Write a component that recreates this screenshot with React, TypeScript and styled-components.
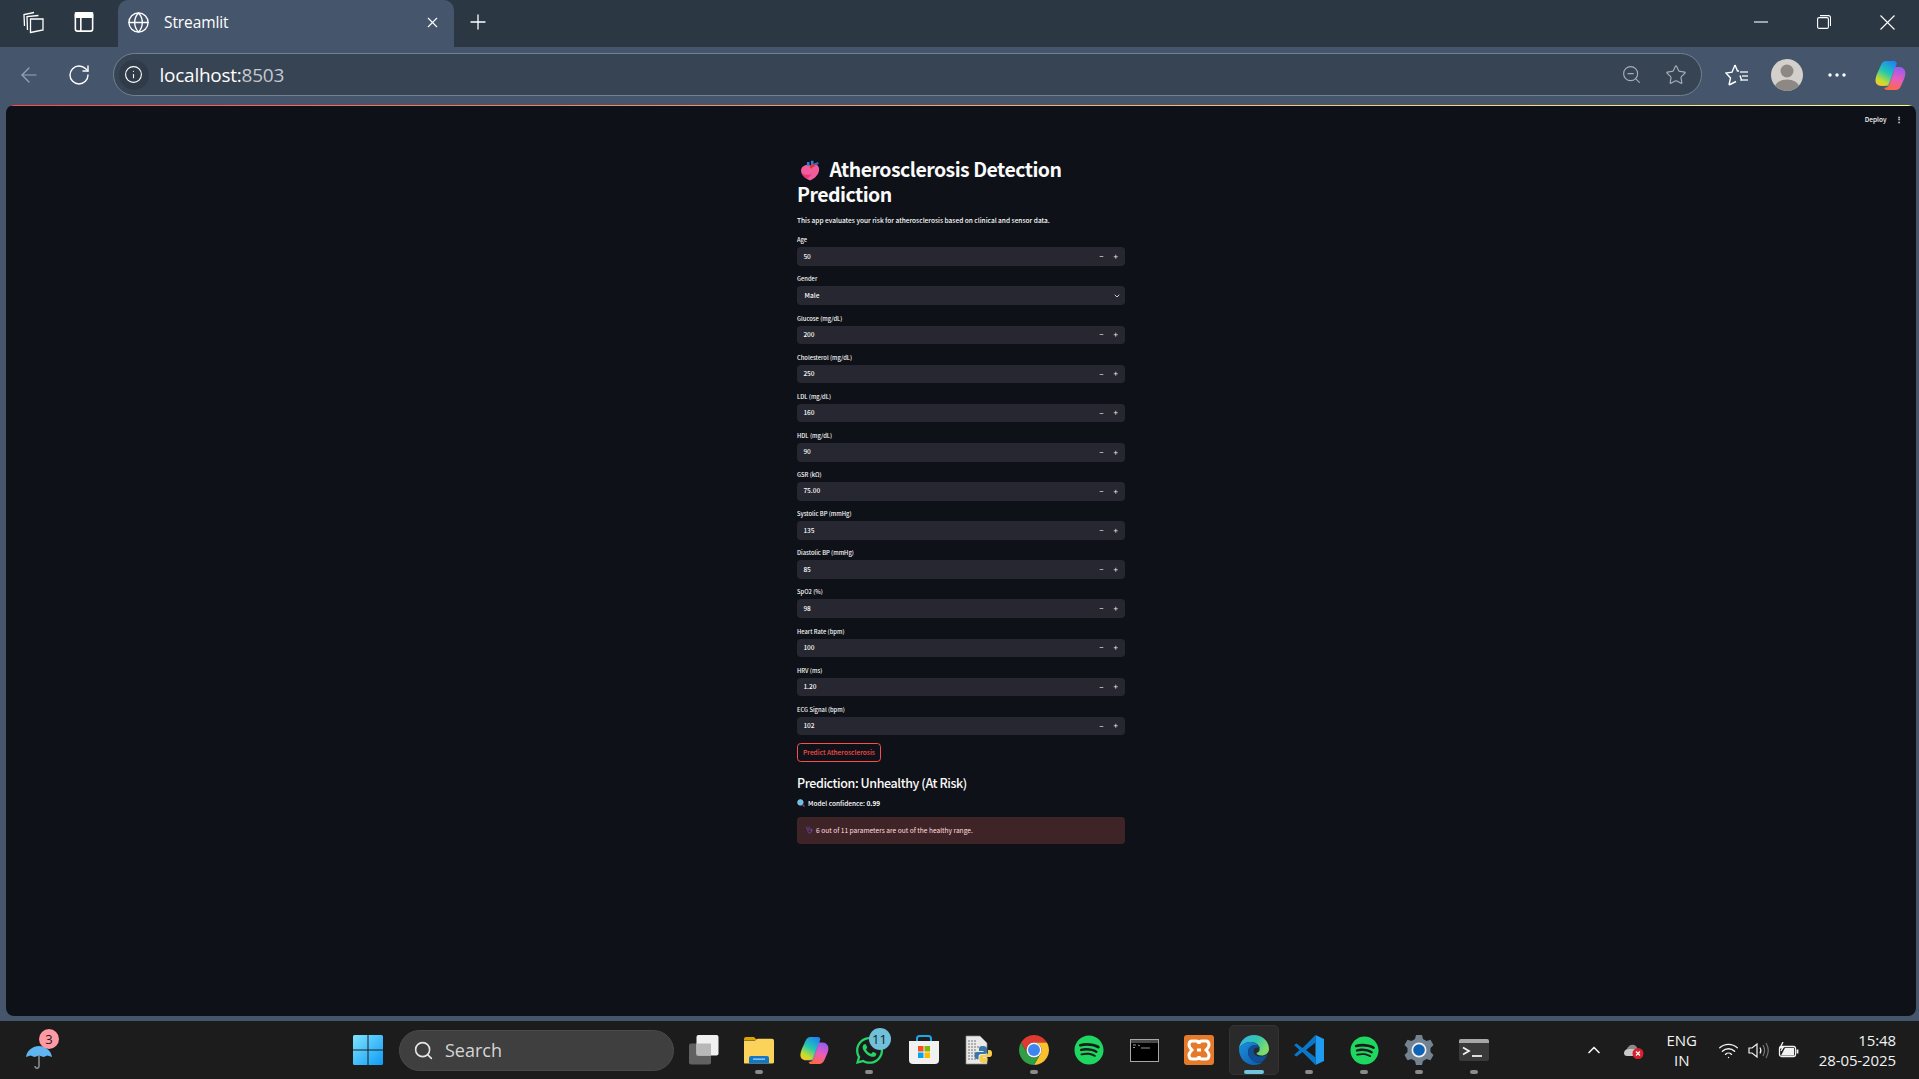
import React from "react";
import styled, { createGlobalStyle } from "styled-components";
import { Globe, X, Plus, ArrowLeft, RotateCw, Info, ZoomOut, Star, Minus, ChevronDown, ChevronUp, Wifi, Search as SearchGlyph } from "lucide-react";
import { FaSpotify, FaWhatsapp } from "react-icons/fa";

const Global = createGlobalStyle`
  html, body { margin: 0; padding: 0; height: 100%; background: #45566c; overflow: hidden; }
  * { box-sizing: border-box; }
`;

const ST = `"Noto Sans CJK SC", "Noto Sans", sans-serif`;
const WIN = `"Open Sans", "Noto Sans", sans-serif`;

const Screen = styled.div`
  width: 100vw; height: 100vh; display: flex; flex-direction: column; background: #45566c; overflow: hidden;
`;
const TitleBar = styled.div`
  height: 47px; flex: none; display: flex; align-items: stretch; background: #2c3744; color: #fff; font-family: ${WIN};
`;
const TabLead = styled.div`
  width: 118px; flex: none; display: flex; align-items: center; padding: 0 0 3px 22px; gap: 29px;
`;
const Tab = styled.div`
  width: 336px; flex: none; display: flex; align-items: center; background: #45566c; border-radius: 10px 10px 0 0;
  padding: 0 13px 3px 9px; gap: 14px; font-size: 15.5px; letter-spacing: -0.1px;
`;
const TabTitle = styled.span` flex: 1; `;
const NewTab = styled.div`
  width: 48px; display: flex; align-items: center; justify-content: center; padding-bottom: 3px;
`;
const WindowControls = styled.div`
  margin-left: auto; display: flex; align-items: center; padding: 0 24px 3px 0; gap: 49px;
`;
const ToolBar = styled.div`
  height: 58px; flex: none; display: flex; align-items: center; padding: 0 13px 3px 17px; color: #fff; font-family: ${WIN};
`;
const NavSlot = styled.div<{ $w: number; $dim?: boolean }>`
  width: ${p => p.$w}px; flex: none; display: flex; align-items: center; color: ${p => p.$dim ? "#9aa5b3" : "#fff"};
`;
const Omnibox = styled.div`
  width: 1589px; flex: none; height: 43px; border: 1.5px solid #75818f; border-radius: 22px; background: #374454;
  display: flex; align-items: center; padding: 0 2px 0 5px;
`;
const InfoChip = styled.div`
  width: 30px; height: 30px; border-radius: 50%; background: #2f3b49; display: flex; align-items: center; justify-content: center; margin-right: 11px;
`;
const Url = styled.span`
  font-size: 19px; letter-spacing: -0.25px; color: #fff; flex: 1;
`;
const UrlPort = styled.span` color: #c3c9d1; `;
const OmniIcon = styled.div`
  width: 45px; display: flex; justify-content: center; color: #a5adb8;
`;
const ToolRight = styled.div`
  display: flex; align-items: center; margin-left: 23px; flex: 1;
`;
const Avatar = styled.svg` width: 32px; height: 32px; margin-left: 22px; `;
const MoreDots = styled.svg` width: 18px; height: 4px; margin: 0 28px 0 25px; `;

const Viewport = styled.main`
  position: relative; flex: 1; min-height: 0; margin: 0 3px 5px 6px; background: #0e1117; border-radius: 8px; overflow: hidden;
  display: flex; flex-direction: column; align-items: center; font-family: ${ST}; color: #fafafa;
  &::before { content: ""; position: absolute; left: 0; right: 0; top: 0; height: 1.4px; background: linear-gradient(90deg, #ff4b4b, #fffd80); }
`;
const Header = styled.div`
  position: absolute; top: 9px; right: 13.5px; display: flex; align-items: center; gap: 8px; font-size: 6.5px; font-weight: 500;
`;
const Kebab = styled.span` font-size: 8px; font-weight: 700; line-height: 1; `;
const Form = styled.div`
  width: 328px; padding-top: 51px; display: flex; flex-direction: column;
`;
const Title = styled.h1`
  margin: 0; font-size: 19.5px; line-height: 25px; font-weight: 700; letter-spacing: -0.52px;
`;
const TitleEmoji = styled.svg`
  width: 20px; height: 21px; vertical-align: -4px; margin: 0 9.5px 0 3px;
`;
const Lead = styled.p`
  margin: 9px 0 9.3px; font-size: 6.55px; line-height: 10px; font-weight: 500;
`;
const Fields = styled.div` display: flex; flex-direction: column; gap: 7.47px; `;
const Field = styled.div` display: flex; flex-direction: column; `;
const Label = styled.label`
  height: 13px; font-size: 5.8px; line-height: 11.2px; color: #fafafa; font-weight: 500;
`;
const InputBox = styled.div`
  height: 18.67px; background: #262730; border-radius: 3.7px; display: flex; align-items: center; padding: 0 1.5px 0 6.4px;
  font-size: 6.55px; color: #fafafa;
`;
const Value = styled.span` flex: 1; padding-bottom: 2px; font-weight: 500; `;
const SelectValue = styled(Value)` padding-left: 1.2px; `;
const Stepper = styled.button`
  width: 15px; height: 100%; padding: 0; border: 0; background: transparent; color: #fafafa; display: flex; align-items: center; justify-content: center;
`;
const SelectChevron = styled(ChevronDown)` margin-right: 2.5px; `;
const PredictButton = styled.button`
  align-self: flex-start; margin-top: 7.47px; width: 84px; height: 18.67px; padding: 0; background: transparent; border: 1px solid #ff4b4b; border-radius: 3.7px;
  color: #ff4b4b; font-family: ${ST}; font-size: 6.55px; font-weight: 500;
`;
const Result = styled.h3`
  margin: 13px 0 0; font-size: 12.5px; line-height: 16px; font-weight: 500; letter-spacing: -0.41px;
`;
const Confidence = styled.p`
  margin: 7.4px 0 0; display: flex; align-items: center; gap: 3px; font-size: 6.55px; line-height: 10px; font-weight: 500;
`;
const Alert = styled.div`
  margin-top: 9px; height: 27px; border-radius: 3.7px; background: #3e2327; color: #ffdede; font-size: 6.62px; font-weight: 400;
  display: flex; align-items: center; gap: 3px; padding: 0 0 0 9px;
`;

const TaskBar = styled.footer`
  height: 58px; flex: none; background: #1c1c1c; display: flex; align-items: center; color: #fff; font-family: ${WIN}; padding-left: 26px;
`;
const Weather = styled.div`
  position: relative; width: 26px; height: 24px; margin: 13px 301px 0 0; flex: none;
`;
const Badge = styled.span<{ $bg: string; $w: number; $top: number; $left: number }>`
  position: absolute; display: flex; align-items: center; justify-content: center; border-radius: 50%;
  top: ${p => p.$top}px; left: ${p => p.$left}px;
  width: ${p => p.$w}px; height: ${p => p.$w}px; background: ${p => p.$bg}; color: #1c1c1c; font-size: 13px; font-family: ${WIN};
`;
const StartButton = styled.svg` width: 30px; height: 30px; flex: none; margin-right: 16px; `;
const SearchBox = styled.div`
  width: 275px; height: 41px; flex: none; border-radius: 21px; background: #3f3f3f; border: 1px solid #4a4a4a; display: flex; align-items: center; padding-left: 13px; gap: 11px;
  color: #d5d5d5; font-size: 18px; margin-right: 2.5px;
`;
const Apps = styled.div` display: flex; align-items: stretch; flex: none; `;
const AppSlot = styled.div<{ $active?: boolean }>`
  position: relative; width: 55px; height: 50px; display: flex; align-items: center; justify-content: center;
  ${p => p.$active ? `&::before { content: ""; position: absolute; left: 2.5px; right: 2.5px; top: 0; bottom: 0; background: #2a2a2a; border: 1px solid #333; border-radius: 5px; }` : ""}
  & > svg { position: relative; }
`;
const Dot = styled.span<{ $active?: boolean }>`
  position: absolute; bottom: 1px; left: 50%; transform: translateX(-50%); height: 4px; border-radius: 2px;
  width: ${p => p.$active ? 20 : 8}px; background: ${p => p.$active ? "#6fc6dc" : "#8a8a8a"};
`;
const Tray = styled.div`
  margin-left: auto; display: flex; align-items: center; padding-right: 23px; font-size: 15px; color: #f2f2f2;
`;
const TrayIcon = styled.div<{ $w: number; $mr?: number }>`
  width: ${p => p.$w}px; flex: none; display: flex; align-items: center; justify-content: center; margin-right: ${p => p.$mr ?? 0}px;
`;
const Lang = styled.div` text-align: center; line-height: 20px; width: 48px; margin: 0 8px 0 4px; `;
const Clock = styled.div` text-align: right; line-height: 20px; margin-left: 15px; letter-spacing: -0.1px; `;

const fields = [
  ["Age", "50"], ["Gender", "Male", "select"], ["Glucose (mg/dL)", "200"], ["Cholesterol (mg/dL)", "250"],
  ["LDL (mg/dL)", "160"], ["HDL (mg/dL)", "90"], ["GSR (kΩ)", "75.00"], ["Systolic BP (mmHg)", "135"],
  ["Diastolic BP (mmHg)", "85"], ["SpO2 (%)", "98"], ["Heart Rate (bpm)", "100"], ["HRV (ms)", "1.20"], ["ECG Signal (bpm)", "102"],
];

const Copilot = ({ size, id }: { size: number; id: string }) => (
  <svg width={size} height={size} viewBox="0 0 32 32">
    <defs>
      <linearGradient id={id + "a"} x1="0.7" y1="0" x2="0.2" y2="1">
        <stop offset="0" stopColor="#1f86f2" /><stop offset="0.45" stopColor="#22c9b0" /><stop offset="0.8" stopColor="#c6dc2e" /><stop offset="1" stopColor="#fbc52e" />
      </linearGradient>
      <linearGradient id={id + "b"} x1="0.6" y1="0" x2="0.3" y2="1">
        <stop offset="0" stopColor="#9a5cf0" /><stop offset="0.5" stopColor="#ea5cb8" /><stop offset="1" stopColor="#ff6a3a" />
      </linearGradient>
    </defs>
    <path d="M12 2h8c1.5 0 2.4 1 2.8 2.3L17 24c-.6 2-1.8 3-3.8 3H8c-3 0-5-1-6-3-1-2-.5-5 1-9l4-9c1-2.500 3-4 5-4z" fill={`url(#${id}a)`} />
    <path d="M21 8h4c3 0 5 1.500 6 4 .8 2.500.3 5-1 8l-3 7c-1 2.500-3 4-5.500 4H13c-1.500 0-2.500-1-2.800-2.300 2 .3 4-.7 5-3.700z" fill={`url(#${id}b)`} />
    <path d="M22.500 4.500 16 25c-.6 2-1.600 3-3 3.500-1.500.3-2.500-.4-2.800-1.800l.5-.2c2.500 0 3.700-1 4.300-3z" fill="#1c6fd0" opacity=".35" />
  </svg>
);

const Heart = () => (
  <TitleEmoji viewBox="0 0 20 21">
    <path d="M3 6.500C1 8 .5 10.500 1.500 13c1.200 3 4.500 5.500 8.500 7.500 4-1.500 8-5 9-9.500.6-3-.4-5.500-3-6.500-2-.7-3.700 0-5 1.200C9 4.300 5.500 4.500 3 6.500z" fill="#f25c9b" />
    <path d="M6 18.500c-2-1.500-3.800-3.500-4.500-5.500 3 2 7 2.500 10 1-1 2.500-3 4-5.500 4.500z" fill="#e0387f" />
    <path d="M7 6V2h2.500v4zM11 6V.8h2.500V6z" fill="#3a7bd5" />
    <path d="M9.500 7c1-2.500 3-3 5-2.800l.3 2.300C13 6.600 12 7.500 11.500 9z" fill="#d9362f" />
    <path d="M14 3.500 18 2l.7 2-3.800 1.500z" fill="#2f6fc4" />
  </TitleEmoji>
);

const Magnifier = () => (
  <svg width="8" height="8" viewBox="0 0 8 8">
    <circle cx="3.400" cy="3.400" r="2.800" fill="#62c3ea" stroke="#a8c4d6" strokeWidth=".6" />
    <path d="M5.400 5.400 7.500 7.500" stroke="#7a3f9c" strokeWidth="1.400" />
  </svg>
);

const Stethoscope = () => (
  <svg width="7" height="8" viewBox="0 0 7 8" fill="none" stroke="#6d4bb8" strokeWidth=".8">
    <path d="M.8.6v2c0 1.200 2.400 1.200 2.400 0v-2" />
    <path d="M2 3.500v2.200c0 1.800 3.400 1.800 3.400 0V4.800" />
    <circle cx="5.400" cy="4" r=".8" fill="#6d4bb8" />
  </svg>
);

const TaskView = () => (
  <svg width="30" height="30" viewBox="0 0 30 30">
    <rect x="0" y="8.500" width="22" height="21" rx="2" fill="#606060" />
    <rect x="7.500" y="0" width="22" height="20.500" rx="2" fill="#f0f0f0" />
    <rect x="7.500" y="8.500" width="14.500" height="12" fill="#b8b8b8" />
  </svg>
);
const Folder = () => (
  <svg width="30" height="28" viewBox="0 0 30 28">
    <path d="M0 3a2 2 0 0 1 2-2h8l3 3h-13z" fill="#d9a207" />
    <path d="M0 27V4.500h11l2.500-1.700H28a2 2 0 0 1 2 2V26a1.500 1.500 0 0 1-1.500 1.500h-28z" fill="#fbd35a" />
    <path d="M5 27v-5a2 2 0 0 1 2-2h16a2 2 0 0 1 2 2v5.500H5z" fill="#1576c4" />
    <rect x="9" y="22.500" width="12" height="1.300" fill="#9fd0f2" />
  </svg>
);
const Store = () => (
  <svg width="30" height="30" viewBox="0 0 30 30">
    <path d="M8 6V3.500C8 2 9 1 10.500 1h9C21 1 22 2 22 3.500V6" fill="none" stroke="#1aa7e8" strokeWidth="2" />
    <path d="M0 6h30v19a4 4 0 0 1-4 4H4a4 4 0 0 1-4-4z" fill="#f1f1f1" />
    <rect x="9" y="11" width="5.500" height="5.500" fill="#f25022" /><rect x="15.500" y="11" width="5.500" height="5.500" fill="#7fba00" />
    <rect x="9" y="17.500" width="5.500" height="5.500" fill="#00a4ef" /><rect x="15.500" y="17.500" width="5.500" height="5.500" fill="#ffb900" />
  </svg>
);
const PyFile = () => (
  <svg width="30" height="30" viewBox="0 0 30 30">
    <path d="M2 1h14l7 7v21H2z" fill="#e9e9e9" stroke="#8a8a8a" strokeWidth=".7" />
    <path d="M4 6h9M4 9h9M4 12h14M4 15h9M4 18h9M4 21h9M4 24h10" stroke="#777" strokeWidth="1" strokeDasharray="2 1" />
    <path d="M19 11c-3 0-4 1-4 2.500V16h4.500v1H13c-2 0-2.500 1.500-2.500 3.500S11 24 13 24h1.500v-2.500c0-1.500 1-2.500 2.500-2.500h4c1 0 2-1 2-2v-3.500C23 12 21.500 11 19 11z" fill="#3a76a8" />
    <path d="M19.500 28c3 0 4-1 4-2.500V23H19v-1h6.500c2 0 2.500-1.500 2.500-3.500S27.500 15 25.500 15H24v2.500c0 1.500-1 2.500-2.500 2.500h-4c-1 0-2 1-2 2v3.500c0 1.500 1.500 2.500 4 2.500z" fill="#f5cf4a" />
  </svg>
);
const Chrome = () => (
  <svg width="30" height="30" viewBox="4 4 40 40">
    <path d="M6.680 14A20 20 0 0 1 41.320 14H24A10 10 0 0 0 15.340 29Z" fill="#dd3b30" />
    <path d="M41.320 14A20 20 0 0 1 24 44L32.660 29A10 10 0 0 0 24 14Z" fill="#fbc02d" />
    <path d="M24 44A20 20 0 0 1 6.680 14L15.340 29A10 10 0 0 0 32.660 29Z" fill="#2f9e46" />
    <circle cx="24" cy="24" r="10" fill="#f4f4f4" /><circle cx="24" cy="24" r="8" fill="#3f85ee" />
  </svg>
);
const Cmd = () => (
  <svg width="29" height="23" viewBox="0 0 29 23">
    <rect x=".5" y=".5" width="28" height="22" fill="#000" stroke="#a8a8a8" />
    <rect x="1" y="1" width="27" height="3" fill="#4a4a4a" />
    <path d="M3 6h3M3 8.500h2M8 6l2 1M11 9h9" stroke="#bbb" strokeWidth=".8" />
  </svg>
);
const Xampp = () => (
  <svg width="30" height="30" viewBox="0 0 30 30">
    <rect width="30" height="30" rx="3" fill="#e57a2b" />
    <path d="M8 6h4c2 0 3 1.500 3 3 0-1.500 1-3 3-3h4c2 0 3 2 3 4s-1.500 3.500-3 5c1.500 1.500 3 3 3 5s-1 4-3 4h-4c-2 0-3-1.500-3-3 0 1.500-1 3-3 3H8c-2 0-3-2-3-4s1.500-3.500 3-5c-1.500-1.500-3-3-3-5s1-4 3-4z" fill="none" stroke="#fff" strokeWidth="3" />
    <rect x="13" y="13.500" width="4" height="3" fill="#fff" />
  </svg>
);
const Edge = () => (
  <svg width="30" height="30" viewBox="0 0 30 30">
    <defs>
      <linearGradient id="edgeA" x1="0" y1="0" x2="1" y2=".4"><stop offset="0" stopColor="#2fb6ef" /><stop offset=".6" stopColor="#35c3b0" /><stop offset="1" stopColor="#7fdc6a" /></linearGradient>
      <linearGradient id="edgeB" x1="0" y1="0" x2="1" y2="1"><stop offset="0" stopColor="#1b8fe0" /><stop offset="1" stopColor="#0c59a4" /></linearGradient>
    </defs>
    <path d="M15 0C23 0 30 6 30 14c0 4-3.500 6.500-7.500 6.500-3 0-5-1-5-2.500 2.500-.5 3.500-2.500 3-5C19.500 9 16 7 11.500 7 6 7 2 10 0 14 .5 6 7 0 15 0z" fill="url(#edgeA)" />
    <path d="M0 14c2-4 6-7 11.500-7 3.500 0 6 1.500 7.500 3.500C14 9 9 12 9 17c0 5 4 9 9 10.500 2 .6 4.500.4 6.500-.5C21.500 29 18.500 30 15 30 6.500 30 0 23 0 14z" fill="url(#edgeB)" />
    <path d="M9 17c0-5 5-8 10-6.500 1.500 1 2 2 1.500 2.500-2-1-6-.5-6 3 0 4 4 6 8 5.500 2 0 4-1 6-2.500-1 3.500-3 6-6 8-2 .9-4.500 1.100-6.500.5C13 26 9 22 9 17z" fill="#0f4f96" />
  </svg>
);
const VsCode = () => (
  <svg width="30" height="30" viewBox="0 0 30 30">
    <path d="M21.500 0 30 4v22l-8.500 4z" fill="#1f9cf0" />
    <path d="M21.500 0 8.500 13 2.500 8.500 0 10l5.500 5L0 20l2.500 1.500 6-4.500 13 13v-7.500L12 15l9.500-7.500z" fill="#0a78c9" />
  </svg>
);
const Gear = () => (
  <svg width="30" height="30" viewBox="0 0 30 30">
    <path d="M12 0h6l1 4 3.500 2 4-1.200 3 5.200-3 3v4l3 3-3 5.200-4-1.200-3.500 2-1 4h-6l-1-4-3.500-2-4 1.200-3-5.200 3-3v-4l-3-3 3-5.200 4 1.200L11 4z" fill="#748391" />
    <circle cx="15" cy="15" r="7.500" fill="#f0f0f0" /><circle cx="15" cy="15" r="5.800" fill="#0f63b5" />
  </svg>
);
const Terminal = () => (
  <svg width="30" height="22" viewBox="0 0 30 22">
    <rect width="30" height="22" rx="2" fill="#3a3a3a" />
    <path d="M0 2a2 2 0 0 1 2-2h26a2 2 0 0 1 2 2v2H0z" fill="#a8a8a8" />
    <path d="M4 8.500 10 12l-6 3.500" fill="none" stroke="#f0f0f0" strokeWidth="1.800" />
    <path d="M13 17h10" stroke="#f0f0f0" strokeWidth="1.800" />
  </svg>
);

const apps: { node: React.ReactNode; dot?: boolean; active?: boolean }[] = [
  { node: <TaskView /> },
  { node: <Folder />, dot: true },
  { node: <Copilot size={30} id="cpT" /> },
  { node: <FaWhatsapp size={31} color="#25d366" />, dot: true },
  { node: <Store /> },
  { node: <PyFile /> },
  { node: <Chrome />, dot: true },
  { node: <FaSpotify size={30} color="#1ed760" /> },
  { node: <Cmd /> },
  { node: <Xampp /> },
  { node: <Edge />, dot: true, active: true },
  { node: <VsCode />, dot: true },
  { node: <FaSpotify size={29} color="#1ed760" />, dot: true },
  { node: <Gear />, dot: true },
  { node: <Terminal />, dot: true },
];

export default function App() {
  return (
    <Screen>
      <Global />
      <TitleBar>
        <TabLead>
          <svg width="23" height="23" viewBox="0 0 22 23" fill="none" stroke="#fff" strokeWidth="1.300">
            <path d="M8 21.500 20.500 19V8L8 8z" /><path d="M5 19 4.500 5.500 16 4.500" /><path d="M2 15 1.500 3.500 11.500 1.500" />
          </svg>
          <svg width="20" height="20" viewBox="0 0 18 19" fill="none" stroke="#fff" strokeWidth="1.500">
            <rect x=".8" y=".8" width="16.400" height="17.400" rx="2" /><path d="M1 5h16V1H1z" fill="#fff" /><path d="M6 5v13" />
          </svg>
        </TabLead>
        <Tab>
          <Globe size={23} strokeWidth={1.4} />
          <TabTitle>Streamlit</TabTitle>
          <X size={17} strokeWidth={1.6} />
        </Tab>
        <NewTab><Plus size={24} strokeWidth={1.3} /></NewTab>
        <WindowControls>
          <svg width="14" height="14" viewBox="0 0 14 14" stroke="#fff" strokeWidth="1.100"><path d="M0 7h14" /></svg>
          <svg width="14" height="14" viewBox="0 0 14 14" fill="none" stroke="#fff" strokeWidth="1.100"><rect x=".6" y="2.600" width="10.800" height="10.800" rx="1.500" /><path d="M3 .6h8.500a2 2 0 0 1 2 2V11" /></svg>
          <svg width="15" height="15" viewBox="0 0 15 15" stroke="#fff" strokeWidth="1.100"><path d="M.5.500l14 14M14.500.500l-14 14" /></svg>
        </WindowControls>
      </TitleBar>
      <ToolBar>
        <NavSlot $w={50} $dim><ArrowLeft size={24} strokeWidth={1.2} /></NavSlot>
        <NavSlot $w={45.5}><RotateCw size={24} strokeWidth={1.4} /></NavSlot>
        <Omnibox>
          <InfoChip><Info size={19} strokeWidth={1.4} color="#fff" /></InfoChip>
          <Url>localhost:<UrlPort>8503</UrlPort></Url>
          <OmniIcon><ZoomOut size={21} strokeWidth={1.3} /></OmniIcon>
          <OmniIcon><Star size={22} strokeWidth={1.3} /></OmniIcon>
        </Omnibox>
        <ToolRight>
          <svg width="24" height="24" viewBox="0 0 24 24" fill="none" stroke="#fff" strokeWidth="1.400"><path d="M10 2l2.500 6H14M15 12.500l1.500 4.500-1 .5M4 22l1.500-7L1 10l6-.8L10 2M4 22l7-3.500" /><path d="M15 9h8M17 13h6M17 17h6" stroke="#dfe3e8" /></svg>
          <Avatar viewBox="0 0 32 32">
            <defs><clipPath id="av"><circle cx="16" cy="16" r="16" /></clipPath></defs>
            <circle cx="16" cy="16" r="16" fill="#d3d0cb" />
            <g clipPath="url(#av)" fill="#8d8883"><circle cx="16" cy="12" r="6.500" /><ellipse cx="16" cy="28" rx="12" ry="7.500" /></g>
          </Avatar>
          <MoreDots viewBox="0 0 18 4" fill="#fff"><circle cx="2" cy="2" r="1.700" /><circle cx="9" cy="2" r="1.700" /><circle cx="16" cy="2" r="1.700" /></MoreDots>
          <Copilot size={32} id="cpB" />
        </ToolRight>
      </ToolBar>
      <Viewport>
        <Header><span>Deploy</span><Kebab>⋮</Kebab></Header>
        <Form>
          <Title><Heart />Atherosclerosis Detection Prediction</Title>
          <Lead>This app evaluates your risk for atherosclerosis based on clinical and sensor data.</Lead>
          <Fields>
            {fields.map(([label, value, kind]) => (
              <Field key={label}>
                <Label>{label}</Label>
                <InputBox>
                  {kind === "select" ? (
                    <>
                      <SelectValue>{value}</SelectValue>
                      <SelectChevron size={8} strokeWidth={2.4} />
                    </>
                  ) : (
                    <>
                      <Value>{value}</Value>
                      <Stepper aria-label="minus"><Minus size={5} strokeWidth={3} /></Stepper>
                      <Stepper aria-label="plus"><Plus size={5.5} strokeWidth={3} /></Stepper>
                    </>
                  )}
                </InputBox>
              </Field>
            ))}
          </Fields>
          <PredictButton>Predict Atherosclerosis</PredictButton>
          <Result>Prediction: Unhealthy (At Risk)</Result>
          <Confidence><Magnifier /><span>Model confidence: <b>0.99</b></span></Confidence>
          <Alert><Stethoscope /><span>6 out of 11 parameters are out of the healthy range.</span></Alert>
        </Form>
      </Viewport>
      <TaskBar>
        <Weather>
          <svg width="26" height="24" viewBox="0 0 26 24">
            <path d="M0 12C1 5 7 1 13 1s12 4 13 11l-4.500-1.500L17.500 12 13 10.500 8.500 12l-4-1.500z" fill="#5fb4f2" />
            <path d="M13 10v11c0 3-4 3-4 0" fill="none" stroke="#8a8a8a" strokeWidth="1.600" />
          </svg>
          <Badge $bg="#ff99a4" $w={20} $top={-16} $left={13}>3</Badge>
        </Weather>
        <StartButton viewBox="0 0 30 30">
          <defs><linearGradient id="win" x1="0" y1="0" x2="1" y2="1"><stop offset="0" stopColor="#7fe3ff" /><stop offset="1" stopColor="#0e9bf5" /></linearGradient></defs>
          <path d="M0 1.500A1.500 1.500 0 0 1 1.500 0h13v14.500H0zM15.500 0H28.500A1.500 1.500 0 0 1 30 1.500v13H15.500zM0 15.500h14.500V30h-13A1.500 1.500 0 0 1 0 28.500zM15.500 15.500H30v13a1.500 1.500 0 0 1-1.500 1.500h-13z" fill="url(#win)" />
        </StartButton>
        <SearchBox><SearchGlyph size={21} strokeWidth={1.8} color="#e6e6e6" />Search</SearchBox>
        <Apps>
          {apps.map((a, i) => (
            <AppSlot key={i} $active={a.active}>
              {a.node}
              {i === 3 && <Badge $bg="#6fc0d8" $w={22} $top={3} $left={27}>11</Badge>}
              {a.dot && <Dot $active={a.active} />}
            </AppSlot>
          ))}
        </Apps>
        <Tray>
          <TrayIcon $w={20} $mr={10}><ChevronUp size={20} strokeWidth={2} /></TrayIcon>
          <TrayIcon $w={40}>
            <svg width="21" height="17" viewBox="0 0 21 17">
              <path d="M1 11a4 4 0 0 1 3-4c1-3 4-5 7-4 2 .5 3 2 3.500 4H5a4 4 0 0 0-4 4z" fill="#8a8a8a" />
              <path d="M1 11c0-2 2-4 4-4h7c2 0 3 2 3 4 0 2-1 3-3 3H4c-2 0-3-1-3-3z" fill="#c9c9c9" />
              <circle cx="15" cy="11.500" r="5.500" fill="#d8202f" />
              <path d="M13 9.500l4 4M17 9.500l-4 4" stroke="#fff" strokeWidth="1.200" />
            </svg>
          </TrayIcon>
          <Lang>ENG<br />IN</Lang>
          <TrayIcon $w={30}><Wifi size={21} strokeWidth={1.6} /></TrayIcon>
          <TrayIcon $w={30}>
            <svg width="21" height="17" viewBox="0 0 21 17" fill="none" stroke="#f2f2f2" strokeWidth="1.200">
              <path d="M1 6v5h3l5 4V2L4 6z" /><path d="M12 5.500c1.200 2 1.200 4 0 6" /><path d="M15 3c2 3.500 2 7.500 0 11M18 1c3 5 3 10 0 15" stroke="#777" />
            </svg>
          </TrayIcon>
          <TrayIcon $w={30}>
            <svg width="21" height="17" viewBox="0 0 21 17" fill="none" stroke="#f2f2f2" strokeWidth="1.300">
              <rect x="1.500" y="4.500" width="16" height="10" rx="2" /><path d="M19.500 7.500v4" strokeWidth="1.800" /><path d="M5 0 2 6l3-.5L3 9" /><path d="M3 13.500 7 6h9v7.500z" fill="#f2f2f2" stroke="none" />
            </svg>
          </TrayIcon>
          <Clock>15:48<br />28-05-2025</Clock>
        </Tray>
      </TaskBar>
    </Screen>
  );
}
